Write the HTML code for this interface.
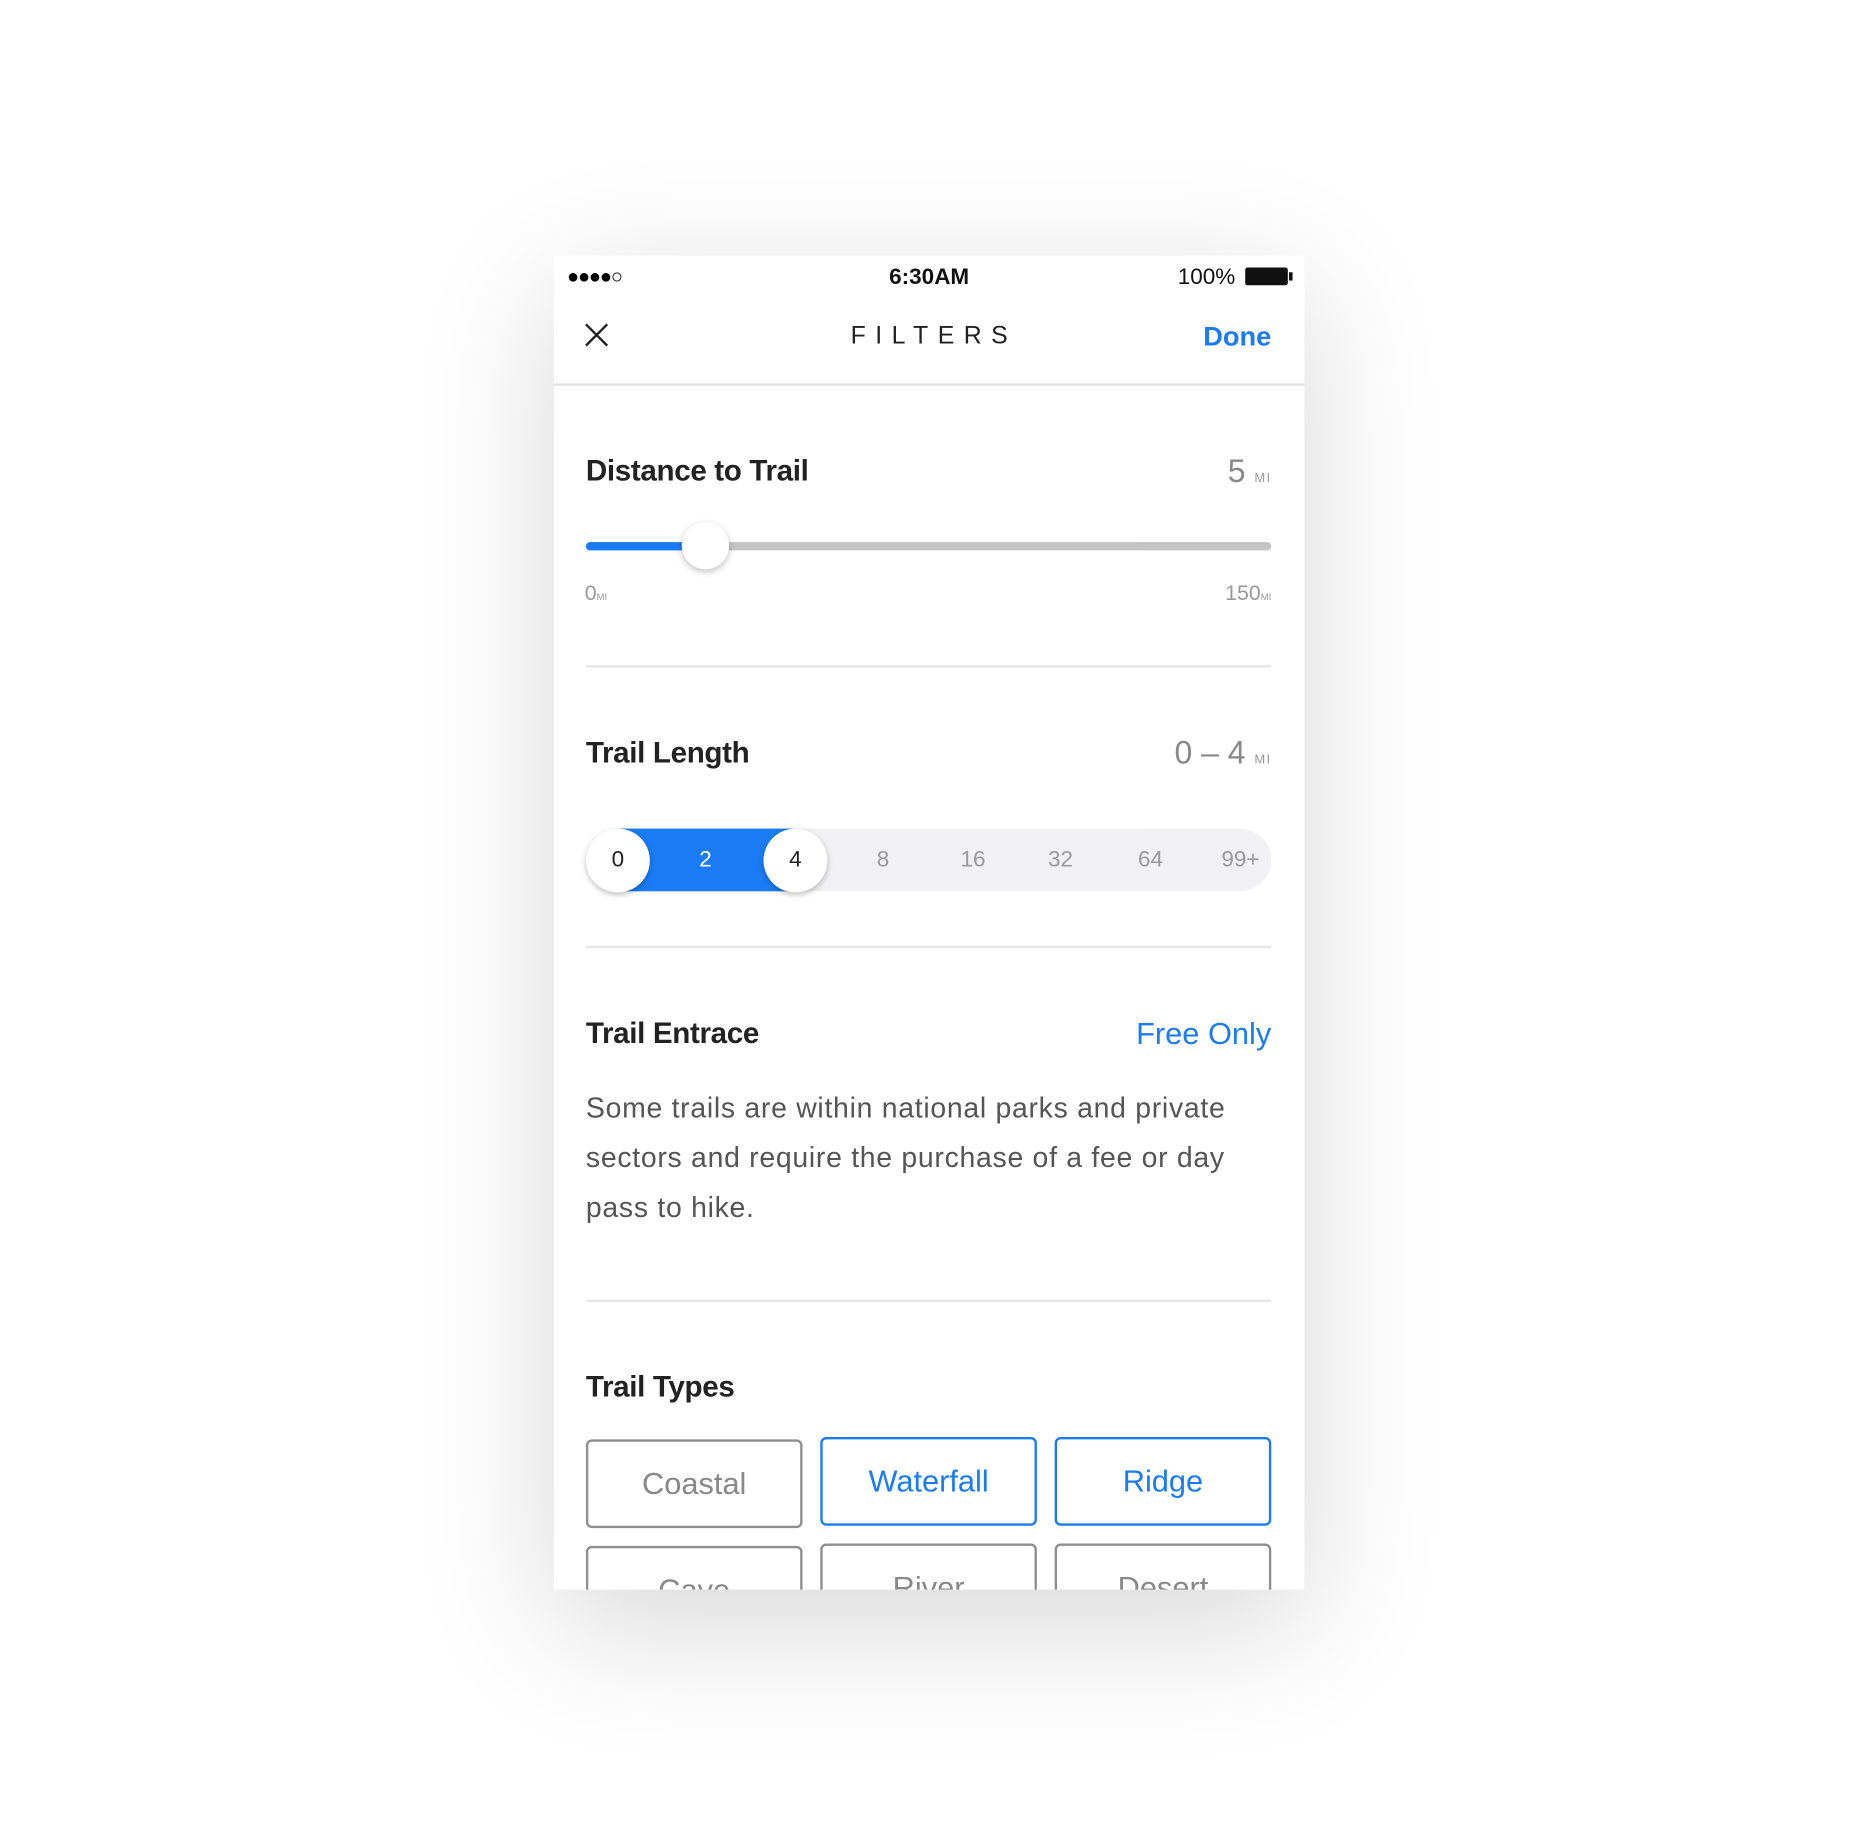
<!DOCTYPE html>
<html><head><meta charset="utf-8"><style>
html,body{margin:0;padding:0;background:#fff;width:1856px;height:1844px;overflow:hidden}
#w{position:absolute;left:0;top:0;width:1568px;height:1558px;transform:scale(1.18367);transform-origin:0 0;font-family:"Liberation Sans",sans-serif}
.ph{position:absolute;left:468px;top:216px;width:634px;height:1127px;background:#fff;overflow:hidden;box-shadow:0 30px 140px rgba(0,0,0,0.16)}
.a{position:absolute;white-space:nowrap}
.h{font-weight:bold;font-size:25px;color:#222;left:27px;letter-spacing:-0.3px}
.div{position:absolute;left:27px;width:579px;height:2px;background:#e6e6e8}
.btn{position:absolute;width:183px;height:75px;border:2px solid #8e8e8e;border-radius:5px;box-sizing:border-box;text-align:center;line-height:71px;font-size:26px;color:#888}
.btn.b{border-color:#1a7cf5;color:#1a7cf5}
.n{position:absolute;top:0;width:50px;margin-left:-25px;text-align:center;line-height:53px;font-size:19px;color:#999}
.c{position:absolute;top:0;width:54px;height:54px;margin-left:-27px;border-radius:50%;background:#fff;box-shadow:0 2px 5px rgba(0,0,0,.25);text-align:center;line-height:54px;font-size:19px;color:#222}
.sm{font-size:11px;letter-spacing:1px;color:#999}
</style></head><body><div id="w">
<div class="ph">
 <div class="a" style="left:11px;top:8px;font-size:17px;letter-spacing:-1px;color:#000">●●●●○</div>
 <div class="a" style="left:0;width:634px;text-align:center;top:8px;font-size:19px;font-weight:bold;color:#111">6:30AM</div>
 <div class="a" style="left:527px;top:8px;font-size:19px;color:#111">100%</div>
 <div class="a" style="left:584px;top:10px;width:36px;height:15px;background:#111;border-radius:2px"></div>
 <div class="a" style="left:621px;top:14px;width:3px;height:7px;background:#111"></div>
 <svg class="a" style="left:26px;top:57px" width="20" height="20"><path d="M1 1L19 19M19 1L1 19" stroke="#222" stroke-width="2"/></svg>
 <div class="a" style="left:0;width:634px;text-align:center;top:56px;font-size:21px;letter-spacing:8px;color:#222;text-indent:8px">FILTERS</div>
 <div class="a" style="right:28px;top:55px;font-size:23px;font-weight:bold;color:#1a7cf5">Done</div>
 <div class="a" style="left:0;top:108px;width:634px;height:2px;background:#e2e2e2"></div>

 <div class="a h" style="top:168px">Distance to Trail</div>
 <div class="a" style="right:28px;top:167px;font-size:27px;color:#888">5 <span class="sm">MI</span></div>
 <div class="a" style="left:27px;top:242px;width:579px;height:7px;border-radius:4px;background:#c4c4c6"></div>
 <div class="a" style="left:27px;top:242px;width:102px;height:7px;border-radius:4px;background:#1a7cf5"></div>
 <div class="a" style="left:108px;top:225px;width:40px;height:40px;border-radius:50%;background:#fff;box-shadow:0 2px 6px rgba(0,0,0,.25)"></div>
 <div class="a" style="left:26px;top:275px;font-size:18px;color:#999">0<span style="font-size:8px">MI</span></div>
 <div class="a" style="right:28px;top:275px;font-size:18px;color:#999">150<span style="font-size:8px">MI</span></div>
 <div class="div" style="top:346px"></div>

 <div class="a h" style="top:406px">Trail Length</div>
 <div class="a" style="right:28px;top:405px;font-size:27px;color:#888">0 – 4 <span class="sm">MI</span></div>
 <div class="a" style="left:27px;top:484px;width:579px;height:53px;border-radius:27px;background:#f1f0f3">
  <div class="a" style="left:27px;top:0;width:150px;height:53px;background:#1a7cf5"></div>
  <div class="c" style="left:27px">0</div>
  <div class="n" style="left:101px;color:#fff">2</div>
  <div class="c" style="left:177px">4</div>
  <div class="n" style="left:251px">8</div>
  <div class="n" style="left:327px">16</div>
  <div class="n" style="left:401px">32</div>
  <div class="n" style="left:477px">64</div>
  <div class="n" style="left:553px">99+</div>
 </div>
 <div class="div" style="top:583px"></div>

 <div class="a h" style="top:643px">Trail Entrace</div>
 <div class="a" style="right:28px;top:642px;font-size:26px;color:#1a7cf5">Free Only</div>
 <div class="a" style="left:27px;top:700px;font-size:24px;line-height:42px;color:#555;letter-spacing:0.6px">Some trails are within national parks and private<br>sectors and require the purchase of a fee or day<br>pass to hike.</div>
 <div class="div" style="top:882px"></div>

 <div class="a h" style="top:942px">Trail Types</div>
 <div class="btn" style="left:27px;top:1000px">Coastal</div>
 <div class="btn b" style="left:225px;top:998px">Waterfall</div>
 <div class="btn b" style="left:423px;top:998px">Ridge</div>
 <div class="btn" style="left:27px;top:1090px">Cave</div>
 <div class="btn" style="left:225px;top:1088px">River</div>
 <div class="btn" style="left:423px;top:1088px">Desert</div>
</div>
</div></body></html>
